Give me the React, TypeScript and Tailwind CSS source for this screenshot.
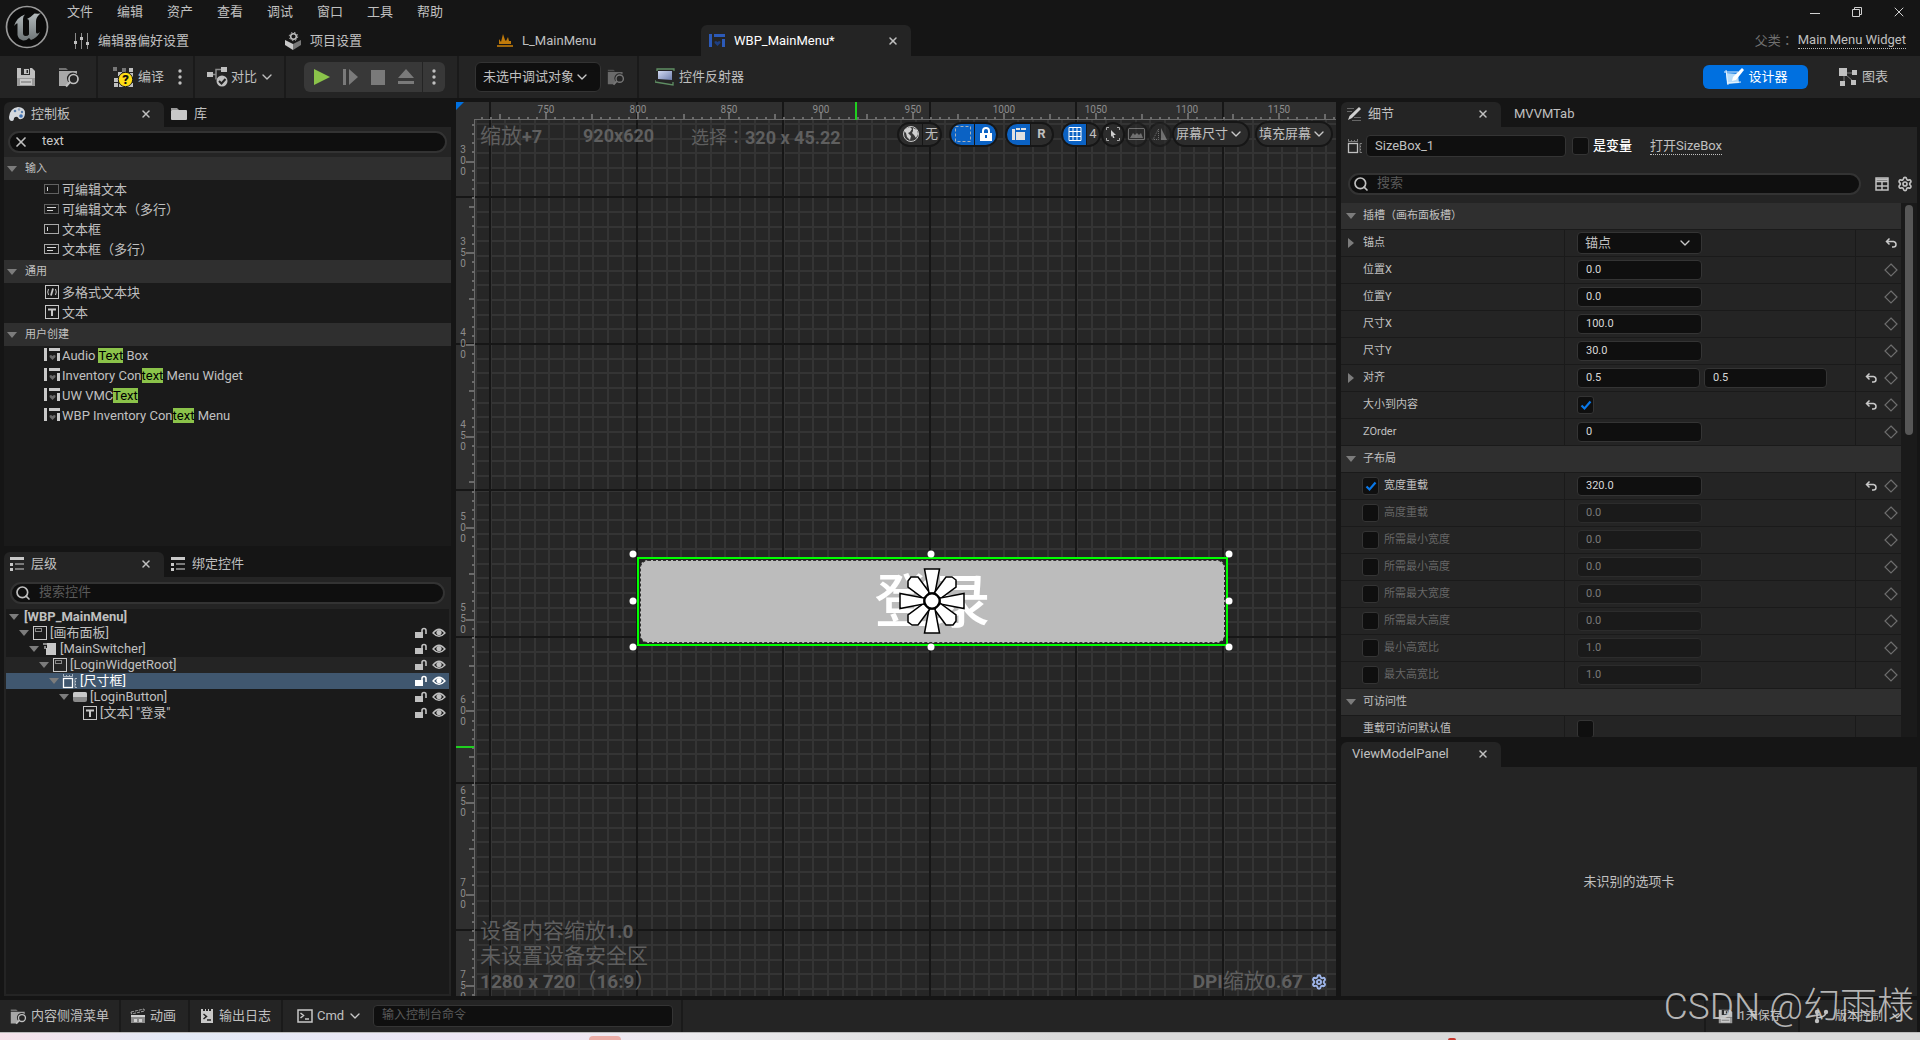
import { Fragment, useId } from 'react';
import type { ReactNode } from 'react';
import { ChevronDown, Search, Settings, X } from 'lucide-react';

const menus = ['文件', '编辑', '资产', '查看', '调试', '窗口', '工具', '帮助'];

type PaletteItem = { icon: ReactNode; text: string; hit?: string };

const palette: { title: string; items: PaletteItem[] }[] = [
  {
    title: '输入',
    items: [
      { icon: <BoxIcon dashed />, text: '可编辑文本' },
      { icon: <BoxIcon dashed multi />, text: '可编辑文本（多行）' },
      { icon: <BoxIcon />, text: '文本框' },
      { icon: <BoxIcon multi />, text: '文本框（多行）' },
    ],
  },
  {
    title: '通用',
    items: [
      { icon: <RichTextIcon />, text: '多格式文本块' },
      { icon: <TextIcon />, text: '文本' },
    ],
  },
  {
    title: '用户创建',
    items: [
      { icon: <WidgetIcon />, text: 'Audio Text Box', hit: 'Text' },
      { icon: <WidgetIcon />, text: 'Inventory Context Menu Widget', hit: 'text' },
      { icon: <WidgetIcon />, text: 'UW VMCText', hit: 'Text' },
      { icon: <WidgetIcon />, text: 'WBP Inventory Context Menu', hit: 'text' },
    ],
  },
];

const tree: { text: string; pad: string; icon?: ReactNode; leaf?: boolean; tone?: string }[] = [
  { text: '[WBP_MainMenu]', pad: 'pl-[3px]' },
  { text: '[画布面板]', pad: 'pl-[13px]', icon: <CanvasIcon /> },
  { text: '[MainSwitcher]', pad: 'pl-[23px]', icon: <SwitcherIcon /> },
  { text: '[LoginWidgetRoot]', pad: 'pl-[33px]', icon: <CanvasIcon />, tone: 'bg-[#242424]' },
  { text: '[尺寸框]', pad: 'pl-[43px]', icon: <SizeBoxIcon />, tone: 'bg-[#40576f] text-white' },
  { text: '[LoginButton]', pad: 'pl-[53px]', icon: <ButtonIcon /> },
  { text: '[文本] "登录"', pad: 'pl-[63px]', icon: <TextIcon />, leaf: true },
];

type Row = {
  name: string;
  kind?: 'header' | 'anchor' | 'check';
  values?: string[];
  expand?: boolean;
  override?: boolean;
  checked?: boolean;
  reset?: boolean;
  noBind?: boolean;
};

const rows: Row[] = [
  { name: '插槽（画布面板槽）', kind: 'header' },
  { name: '锚点', kind: 'anchor', expand: true, reset: true, noBind: true },
  { name: '位置X', values: ['0.0'] },
  { name: '位置Y', values: ['0.0'] },
  { name: '尺寸X', values: ['100.0'] },
  { name: '尺寸Y', values: ['30.0'] },
  { name: '对齐', values: ['0.5', '0.5'], expand: true, reset: true },
  { name: '大小到内容', kind: 'check', checked: true, reset: true },
  { name: 'ZOrder', values: ['0'] },
  { name: '子布局', kind: 'header' },
  { name: '宽度重载', values: ['320.0'], override: true, checked: true, reset: true },
  { name: '高度重载', values: ['0.0'], override: true },
  { name: '所需最小宽度', values: ['0.0'], override: true },
  { name: '所需最小高度', values: ['0.0'], override: true },
  { name: '所需最大宽度', values: ['0.0'], override: true },
  { name: '所需最大高度', values: ['0.0'], override: true },
  { name: '最小高宽比', values: ['1.0'], override: true },
  { name: '最大高宽比', values: ['1.0'], override: true },
  { name: '可访问性', kind: 'header' },
  { name: '重载可访问默认值', kind: 'check', noBind: true },
];

// ---------- icons ----------

function BoxIcon({ dashed, multi }: { dashed?: boolean; multi?: boolean }) {
  return (
    <svg width="16" height="16" viewBox="0 0 16 16" fill="none" stroke="#a8a8a8">
      <rect x=".5" y="3.5" width="14" height="9" strokeDasharray={dashed ? '1 1' : undefined} />
      {multi ? <path d="M3 6.500h9M3 9.500h6" stroke="#d8d8d8" /> : <path d="M3.500 6v4" stroke="#d8d8d8" />}
    </svg>
  );
}

function RichTextIcon() {
  return (
    <svg width="16" height="16" viewBox="0 0 16 16" fill="none" stroke="#c8c8c8">
      <rect x="1.5" y="1.5" width="13" height="13" />
      <path d="M4.500 5Q3 8 4.500 11M11.500 5Q13 8 11.500 11" />
      <path d="M9 4.500L7 11.500" strokeWidth="1.800" />
    </svg>
  );
}

function TextIcon() {
  return (
    <svg width="16" height="16" viewBox="0 0 16 16" fill="none" stroke="#c8c8c8">
      <rect x="1.5" y="1.5" width="13" height="13" />
      <path d="M4 5.500h8M8 5v7" strokeWidth="2" />
    </svg>
  );
}

function WidgetIcon({ fill = '#c8c8c8', heart = '#6a6a6a' }: { fill?: string; heart?: string }) {
  return (
    <svg width="16" height="16" viewBox="0 0 16 16">
      <path d="M0 1h3v13H0zM5 1h11v3H5zM13 6h3v8h-3z" fill={fill} />
      <path d="M8.500 13L5.500 10q-.5-2 1.500-2l1.500 1L10 8q2 0 1.500 2z" fill={heart} />
    </svg>
  );
}

function CanvasIcon() {
  return (
    <svg width="16" height="16" viewBox="0 0 16 16" fill="none" stroke="#c8c8c8">
      <rect x="1.5" y="1.5" width="13" height="13" />
      <rect x="3.500" y="3.500" width="6" height="3" stroke="#8a8a8a" />
    </svg>
  );
}

function SwitcherIcon() {
  return (
    <svg width="16" height="16" viewBox="0 0 16 16">
      <path d="M1 2h4v2H1zM2 5h2v3H2z" fill="#8a8a8a" />
      <path d="M5 2h9v12H4V7h1z" fill="#c8c8c8" />
    </svg>
  );
}

function SizeBoxIcon() {
  return (
    <svg width="16" height="16" viewBox="0 0 16 16" fill="none" stroke="currentColor">
      <rect x="1.5" y="5.500" width="9" height="9" strokeWidth="1.300" />
      <path d="M1.500 1v2.500h9V1M4.500 2v1M7.500 2v1M15 5.500h-2v9h2M14 8.500h-1M14 11.500h-1" opacity=".55" />
    </svg>
  );
}

function ButtonIcon() {
  return (
    <svg width="16" height="16" viewBox="0 0 16 16">
      <rect x="1" y="3" width="14" height="10" rx="2" fill="#8a8a8a" />
      <path d="M1 8V5q0-2 2-2h10q2 0 2 2v3z" fill="#c8c8c8" />
    </svg>
  );
}

function FolderSearch({ size = 22 }: { size?: number }) {
  return (
    <svg width={size} height={size} viewBox="0 0 22 22">
      <path d="M1 2h7l2 2H1z" fill="currentColor" opacity=".5" />
      <path d="M1 5h18v3a6 6 0 0 0-8 9l-2 3H1z" fill="currentColor" opacity=".85" />
      <circle cx="15.500" cy="13" r="4.500" fill="none" stroke="currentColor" strokeWidth="1.700" />
      <path d="M12 16l-4 4.500" stroke="currentColor" strokeWidth="2" />
    </svg>
  );
}

function SaveIcon({ size = 20 }: { size?: number }) {
  return (
    <svg width={size} height={size} viewBox="0 0 20 20">
      <path d="M1 1h15l3 3v7H1z" fill="#c0c0c0" />
      <path d="M1 11h18v8H1z" fill="#9a9a9a" />
      <path d="M5 1h9v7H5z" fill="#2a2a2a" />
      <path d="M8 2h5v5H8z" fill="#c0c0c0" />
      <path d="M10.500 3h1.500v3h-1.500z" fill="#2a2a2a" />
      <path d="M4 12h12v6H4z" fill="#c8c8c8" />
      <path d="M5 15h10" stroke="#6a6a6a" />
    </svg>
  );
}

function CompileIcon() {
  return (
    <svg width="22" height="22" viewBox="0 0 22 22">
      <g fill="#c0c0c0">
        <path d="M17 2h4v4h-4zM6 6h4v4H6zM2 12h4v4H2zM2 17h4v4H2zM7 17h14v4H7zM17 7h4v4h-4z" />
      </g>
      <path d="M1 1h4v4H1zM10 2h4v4h-4zM6 11h4v4H6z" fill="#777" />
      <circle cx="13.500" cy="13.500" r="7.200" fill="#ffdd15" stroke="#1a1a1a" />
      <text x="13.500" y="18" textAnchor="middle" fontSize="13" fontWeight="900" fontFamily="Roboto" fill="#111">?</text>
    </svg>
  );
}

function DiffIcon() {
  return (
    <svg width="22" height="22" viewBox="0 0 22 22" fill="#c0c0c0">
      <path d="M1 6h6v5H1zM15 1h6v5h-6z" />
      <path d="M7 8.500h3v-5h5M10 8.500v5" fill="none" stroke="#8a8a8a" strokeWidth="1.500" />
      <circle cx="16" cy="15" r="5.500" />
      <path d="M13 15l2.500 2.500L19.500 13" fill="none" stroke="#222" strokeWidth="2" />
    </svg>
  );
}

function Logo() {
  return (
    <svg width="44" height="44" viewBox="0 0 44 44">
      <defs>
        <linearGradient id="logoShade" x1="0" y1="0" x2="0" y2="1">
          <stop offset="0" stopColor="#b4bbbd" />
          <stop offset="1" stopColor="#6d7476" />
        </linearGradient>
      </defs>
      <circle cx="22" cy="22" r="20.500" fill="#0b0b0b" stroke="#9a9a9a" strokeWidth="1.700" />
      <path
        d="M9 21Q12 12 20 9.500Q18 11 18 14V28Q18 31 20.500 31Q23 31 24 29.500V16Q24 14 22 14Q26 12 29.500 8.500Q35 9 36 8Q31 12 31 16V27Q31 29 33 28.500L35 27Q32 33 26 35L24 33Q21 36 18 35.500Q13 34 12.500 30V19Q12.500 17 9 21Z"
        fill="url(#logoShade)"
      />
    </svg>
  );
}

function PaletteIcon() {
  return (
    <svg width="16" height="16" viewBox="0 0 16 16">
      <path d="M9 1Q16 1 16 7.500Q15.500 14 10 13Q8 9 5 12Q5 15 3 15Q0 15 0 11Q1 2 9 1z" fill="#d5d9de" />
      <circle cx="6" cy="5" r="1.300" fill="#5a7fae" />
      <circle cx="10" cy="3.500" r="1.200" fill="#8da6c4" />
      <circle cx="13" cy="6" r="1.200" fill="#5a7fae" />
      <circle cx="12" cy="10" r="1.800" fill="#3f72b5" />
    </svg>
  );
}

function ListIcon() {
  return (
    <svg width="16" height="16" viewBox="0 0 16 16">
      <path d="M1 1h14v3H1zM1 7h3v3H1zM1 12h3v3H1z" fill="#c8c8c8" />
      <path d="M6 7h9v2H6zM6 12h9v2H6z" fill="#7a7a7a" />
    </svg>
  );
}

function FolderIcon() {
  return (
    <svg width="18" height="14" viewBox="0 0 18 14">
      <path d="M1 1h6l2 2H1z" fill="#999" />
      <path d="M1 4q0-1 1-1h14q1 0 1 1v8q0 1-1 1H2q-1 0-1-1z" fill="#c8c8c8" />
    </svg>
  );
}

function PencilIcon() {
  return (
    <svg width="16" height="16" viewBox="0 0 16 16">
      <path d="M1 2.500h7M1 5.500h5M8 11.500h7M6 14.500h9" stroke="#666" />
      <path d="M13 1l2 2-9 9-4 2 1.500-4z" fill="#d0d0d0" />
    </svg>
  );
}

function LockOpen() {
  return (
    <svg width="14" height="12" viewBox="0 0 14 12">
      <path d="M1 5h8v6H1z" fill="currentColor" />
      <path d="M8 5V3.500a2 2 0 0 1 4 0V7" fill="none" stroke="currentColor" strokeWidth="1.600" />
    </svg>
  );
}

function Eye() {
  return (
    <svg width="14" height="12" viewBox="0 0 14 12" fill="none" stroke="currentColor">
      <path d="M1 6Q7-1.500 13 6Q7 12.500 1 6z" strokeWidth="1.300" />
      <circle cx="7" cy="5.500" r="2.600" fill="currentColor" stroke="none" />
    </svg>
  );
}

function ResetIcon() {
  return (
    <svg width="14" height="12" viewBox="-1 0 14 12" fill="none" stroke="#c8c8c8" strokeWidth="1.500">
      <path d="M4.500 1.500L1.500 4.500l3 3M1.500 4.500H8.500Q11 5 11 7.500Q11 10 8.500 10H7" />
    </svg>
  );
}

function Diamond() {
  return (
    <svg width="14" height="14" viewBox="0 0 14 14" fill="none" stroke="#6e6e6e" strokeWidth="1.200">
      <path d="M7 1l6 6-6 6-6-6z" />
    </svg>
  );
}

function Triangle({ right }: { right?: boolean }) {
  return (
    <svg width="10" height="10" viewBox="0 0 10 10" fill="#7c7c7c" className="shrink-0">
      {right ? <path d="M2 0l6 5-6 5z" /> : <path d="M0 2h10L5 8z" />}
    </svg>
  );
}

function Dots() {
  return (
    <svg width="4" height="16" viewBox="0 0 4 16" fill="#c0c0c0">
      <circle cx="2" cy="2" r="1.700" />
      <circle cx="2" cy="8" r="1.700" />
      <circle cx="2" cy="14" r="1.700" />
    </svg>
  );
}

// ---------- shared controls ----------

function Divider() {
  return <span className="w-[2px] shrink-0 self-stretch bg-[#1a1a1a]" />;
}

function Colon() {
  return <span className="font-['Noto_Sans_CJK_TC',sans-serif]">：</span>;
}

function Select({ label, className, pad = 'pl-2' }: { label: string; className: string; pad?: string }) {
  return (
    <span className={`relative flex items-center ${className}`}>
      <select aria-label={label} className={`h-full w-full appearance-none bg-transparent outline-none ${pad}`}>
        <option>{label}</option>
      </select>
      <ChevronDown className="pointer-events-none absolute right-2 h-4 w-4 text-[#c8c8c8]" />
    </span>
  );
}

function Tab({ icon, children, active }: { icon?: ReactNode; children: ReactNode; active?: boolean }) {
  return (
    <div className={`flex h-[25px] items-center pb-[2px] ${active ? 'w-40 rounded-t-md bg-[#242424] pl-[5px]' : 'pl-[6px]'}`}>
      <button role="tab" aria-selected={!!active} className="flex items-center gap-[6px]">
        {icon}
        {children}
      </button>
      {active && (
        <button aria-label="close" className="mr-3 ml-auto">
          <X className="h-3 w-3" strokeWidth={3} />
        </button>
      )}
    </div>
  );
}

function CheckBox({ id, checked }: { id: string; checked?: boolean }) {
  return (
    <span className="relative flex h-[18px] w-[17px] shrink-0 items-center justify-center">
      <input
        id={id}
        type="checkbox"
        defaultChecked={checked}
        className="peer h-full w-full appearance-none rounded-[3px] border border-[#343434] bg-[#0f0f0f]"
      />
      <svg viewBox="0 0 12 12" className="pointer-events-none absolute hidden h-3 w-3 peer-checked:block">
        <path d="M1.500 6.500L4.500 9.500L10.500 2.500" fill="none" stroke="#0a78e8" strokeWidth="2.200" />
      </svg>
    </span>
  );
}

function SearchBox({ placeholder, value }: { placeholder: string; value?: string }) {
  return (
    <label className="flex h-[22px] flex-1 items-center rounded-full border-2 border-[#333] bg-[#0f0f0f] px-[3px]">
      {value ? (
        <X className="mr-[13px] h-4 w-4 shrink-0" strokeWidth={2.5} />
      ) : (
        <Search className="mr-2 h-4 w-4 shrink-0" strokeWidth={2.5} />
      )}
      <input
        aria-label={placeholder}
        placeholder={placeholder}
        defaultValue={value}
        className="w-full bg-transparent pb-[2px] leading-4 text-[#c8c8c8] outline-none placeholder:text-[#5a5a5a]"
      />
    </label>
  );
}

// ---------- top ----------

function TitleBar() {
  return (
    <header className="flex h-14 shrink-0 items-stretch">
      <div className="w-[62px] shrink-0 pt-[5px] pl-[5px]">
        <Logo />
      </div>
      <div className="flex min-w-0 flex-1 flex-col">
        <div className="flex h-[25px] items-center justify-between pb-[2px] pl-[5px]">
          <nav className="flex gap-6">
            {menus.map((m) => (
              <button key={m} className="w-[26px]">
                {m}
              </button>
            ))}
          </nav>
          <div className="flex items-center gap-[26px] pr-[13px]">
            <button aria-label="minimize">
              <svg width="16" height="16" viewBox="0 0 16 16" stroke="#d0d0d0">
                <path d="M3 9.500h10" />
              </svg>
            </button>
            <button aria-label="restore">
              <svg width="16" height="16" viewBox="0 0 16 16" fill="none" stroke="#d0d0d0">
                <path d="M3.500 5.500h7v7h-7zM5.500 5V3.500h7v7H11" />
              </svg>
            </button>
            <button aria-label="close window">
              <X className="h-4 w-4 text-[#d0d0d0]" strokeWidth={1.5} />
            </button>
          </div>
        </div>
        <div className="flex h-[31px] items-center">
          <button className="flex w-[212px] items-center gap-2 pl-[11px]">
            <svg width="17" height="16" viewBox="0 0 17 16" stroke="#c0c0c0" fill="#c0c0c0">
              <path d="M2.500 0v16M8.500 0v16M14.500 0v16" stroke="#8a8a8a" />
              <path d="M1 8h3v3H1zM7 4h3v3H7zM13 9h3v3h-3z" stroke="none" />
            </svg>
            编辑器偏好设置
          </button>
          <button className="flex w-[212px] items-center gap-2 pl-[10px]">
            <svg width="18" height="18" viewBox="0 0 18 18">
              <path d="M1 8l8 4v6l-8-5z" fill="#c8c8c8" />
              <path d="M17 8l-8 4v6l8-5z" fill="#777" />
              <circle cx="9.500" cy="4.500" r="2.800" fill="none" stroke="#c0c0c0" strokeWidth="1.500" />
              <circle cx="9.500" cy="4.500" r="4.200" fill="none" stroke="#c0c0c0" strokeDasharray="1.500 1.800" />
            </svg>
            项目设置
          </button>
          <button className="flex w-[215px] items-center gap-2 pl-[10px]">
            <svg width="18" height="16" viewBox="0 0 18 16" fill="#c07a0a">
              <path d="M3 11V6l2 3 2-8 2 6 1 1 2-4 1 4 2 0v3z" />
              <path d="M1 12h16v2H1z" opacity=".8" />
            </svg>
            L_MainMenu
          </button>
          <div className="flex h-full w-[210px] items-center rounded-t-md bg-[#242424] pl-2 text-white">
            <button className="flex items-center gap-[9px]">
              <WidgetIcon fill="#2c5ab8" heart="#1f3f80" />
              WBP_MainMenu*
            </button>
            <button aria-label="close tab" className="mr-3 ml-auto">
              <X className="h-3 w-3 text-[#c0c0c0]" strokeWidth={3} />
            </button>
          </div>
          <div className="ml-auto flex items-center gap-1 pr-[14px]">
            <span className="text-[#707070]">
              父类
              <Colon />
            </span>
            <a href="#" className="border-b border-dotted border-[#c0c0c0] leading-4">
              Main Menu Widget
            </a>
          </div>
        </div>
      </div>
    </header>
  );
}

function ToolBar() {
  return (
    <div className="flex h-[42px] shrink-0 items-center bg-[#242424]">
      <div className="flex w-24 items-center gap-[22px] pl-4">
        <button aria-label="save">
          <SaveIcon />
        </button>
        <button aria-label="browse">
          <FolderSearch />
        </button>
      </div>
      <Divider />
      <div className="flex w-[95px] items-center pl-[14px]">
        <button className="flex items-center gap-1">
          <CompileIcon />
          编译
        </button>
        <button aria-label="compile options" className="ml-[14px]">
          <Dots />
        </button>
      </div>
      <Divider />
      <button className="flex w-[89px] items-center pl-[11px]">
        <DiffIcon />
        <span className="mr-[2px] ml-[3px]">对比</span>
        <ChevronDown className="h-4 w-4" />
      </button>
      <Divider />
      <div className="mr-3 ml-[18px] flex h-[30px] items-center rounded-md bg-[#383838]">
        <div className="flex items-center gap-[10px] pr-[7px] pl-[9px]">
          <button aria-label="play">
            <svg width="18" height="18" viewBox="0 0 18 18">
              <path d="M1 1l16 8-16 8z" fill="#8bc34a" />
            </svg>
          </button>
          <button aria-label="step">
            <svg width="18" height="18" viewBox="0 0 18 18" fill="#7a7a7a">
              <path d="M2 1h3v16H2zM8 1l9 8-9 8z" />
            </svg>
          </button>
          <button aria-label="stop">
            <svg width="18" height="18" viewBox="0 0 18 18" fill="#7a7a7a">
              <path d="M2 2h14v15H2z" />
            </svg>
          </button>
          <button aria-label="eject">
            <svg width="18" height="18" viewBox="0 0 18 18" fill="#7a7a7a">
              <path d="M9 1l8 9H1zM1 13h16v3H1z" />
            </svg>
          </button>
        </div>
        <button aria-label="play options" className="flex h-full w-[23px] items-center justify-center border-l border-[#242424]">
          <Dots />
        </button>
      </div>
      <Divider />
      <Select label="未选中调试对象" className="ml-4 h-[30px] w-[126px] rounded-md border border-[#333] bg-[#0f0f0f] *:last:right-[10px]" pad="pl-[7px]" />
      <button aria-label="find debug object" className="mr-3 ml-[6px] text-[#777]">
        <FolderSearch size={18} />
      </button>
      <Divider />
      <button className="ml-4 flex items-center gap-1">
        <svg width="20" height="18" viewBox="0 0 20 18">
          <defs>
            <linearGradient id="screen" x1="0" y1="0" x2="1" y2="1">
              <stop offset="0" stopColor="#d2daf2" />
              <stop offset="1" stopColor="#6f7fae" />
            </linearGradient>
          </defs>
          <path d="M2 3V1h17v2M0 12v2l18 3v-3" fill="none" stroke="#5f8e63" strokeWidth="1.300" />
          <path d="M3 3h14v9l-14-1z" fill="url(#screen)" />
        </svg>
        控件反射器
      </button>
      <div className="mr-8 ml-auto flex items-center gap-[31px]">
        <button className="flex h-6 w-[105px] items-center justify-center gap-1 rounded-md bg-[#0070e0] text-white">
          <svg width="21" height="18" viewBox="0 0 21 18">
            <path d="M3 5l12 1 1 9-12 1z" fill="#b8dcf8" />
            <path d="M1 4h14M3 2l2 15M4 15l14-1" fill="none" stroke="#e8f4ff" />
            <path d="M19 0l2 2-8 10-4 1 1-4z" fill="#fff" />
          </svg>
          设计器
        </button>
        <button className="flex items-center gap-[5px]">
          <svg width="18" height="18" viewBox="0 0 18 18" fill="#c0c0c0">
            <path d="M5 5l10 0M5 5v10M6 6l9 8" stroke="#777" />
            <path d="M0 0h8v8H0zM13 2h5v5h-5zM1 13h5v5H1zM12 12h5v5h-5z" />
          </svg>
          图表
        </button>
      </div>
    </div>
  );
}

// ---------- left ----------

function Highlight({ text, hit }: { text: string; hit?: string }) {
  if (!hit) return <>{text}</>;
  const [before, after] = text.split(hit);
  return (
    <>
      {before}
      <mark className="bg-[#8bc34a] text-black">{hit}</mark>
      {after}
    </>
  );
}

function PalettePanel() {
  return (
    <section className="flex min-h-0 flex-1 flex-col">
      <div role="tablist" className="flex">
        <Tab active icon={<PaletteIcon />}>
          控制板
        </Tab>
        <Tab icon={<FolderIcon />}>库</Tab>
      </div>
      <div className="flex h-[30px] shrink-0 items-center bg-[#242424] px-1">
        <SearchBox placeholder="搜索控制板" value="text" />
      </div>
      <div className="min-h-0 flex-1 overflow-hidden bg-[#1a1a1a]">
        {palette.map((group) => (
          <Fragment key={group.title}>
            <button className="flex h-[23px] w-full items-center gap-2 bg-[#2f2f2f] pl-[3px] text-[11px]">
              <Triangle />
              {group.title}
            </button>
            <ul>
              {group.items.map((item) => (
                <li key={item.text} className="flex h-5 items-center gap-[2px] pb-[2px] pl-10 leading-[15px]">
                  {item.icon}
                  <span>
                    <Highlight text={item.text} hit={item.hit} />
                  </span>
                </li>
              ))}
            </ul>
          </Fragment>
        ))}
      </div>
    </section>
  );
}

function HierarchyPanel() {
  return (
    <section className="flex min-h-0 flex-1 flex-col">
      <div role="tablist" className="flex">
        <Tab active icon={<ListIcon />}>
          层级
        </Tab>
        <Tab icon={<ListIcon />}>绑定控件</Tab>
      </div>
      <div className="flex min-h-0 flex-1 flex-col bg-[#242424] px-[2px] pb-[2px]">
        <div className="flex h-8 shrink-0 items-center px-1">
          <SearchBox placeholder="搜索控件" />
        </div>
        <ul className="min-h-0 flex-1 overflow-hidden bg-[#1a1a1a]">
          {tree.map((node) => (
            <li key={node.text} className={`flex h-4 items-center leading-4 ${node.pad} ${node.tone ?? ''}`}>
              {node.leaf ? <span className="w-[10px]" /> : <Triangle />}
              <span className="ml-[3px]">{node.icon}</span>
              <span className={node.icon ? 'ml-[2px]' : 'ml-[2px] font-bold'}>{node.text}</span>
              {node.icon && (
                <span className="mr-[3px] ml-auto flex gap-1">
                  <button aria-label={`lock ${node.text}`}>
                    <LockOpen />
                  </button>
                  <button aria-label={`show ${node.text}`}>
                    <Eye />
                  </button>
                </span>
              )}
            </li>
          ))}
        </ul>
      </div>
    </section>
  );
}

// ---------- designer canvas ----------

const UNIT = 1.8325; // screen px per slate unit
const range = (n: number) => Array.from({ length: n }, (_, i) => i);

function Grid() {
  const cell = UNIT * 8;
  return (
    <svg className="absolute inset-0 h-full w-full" shapeRendering="crispEdges">
      {range(120).map((i) => (
        <rect key={`v${i}`} x={19 + Math.round(i * cell)} width="2" height="100%" fill="#343434" />
      ))}
      {range(90).map((i) => (
        <rect key={`h${i}`} y={21 + Math.round(i * cell)} height="2" width="100%" fill="#343434" />
      ))}
      <rect width="100%" height="18" fill="#2f2f2f" />
      <rect width="19" height="100%" fill="#2f2f2f" />
      {range(16).map((i) => (
        <rect key={`V${i}`} x={33 + Math.round(i * cell * 10)} width="2" height="100%" fill="#161616" />
      ))}
      {range(12).map((i) => (
        <rect key={`H${i}`} y={94 + Math.round(i * cell * 10)} height="2" width="100%" fill="#161616" />
      ))}
    </svg>
  );
}

function Rulers() {
  const step = UNIT * 5;
  return (
    <svg className="absolute inset-0 h-full w-full" fill="#8c8c8c" fontSize="10" fontFamily="Roboto">
      <g shapeRendering="crispEdges" fill="#6a6a6a">
        <rect x="18" y="17" width="100%" height="1" />
        <rect x="18" y="17" width="1" height="100%" />
        {range(180).map((i) => {
          const h = i % 10 === 7 ? 6 : i % 10 === 2 ? 5 : 2;
          return <rect key={i} x={25 + Math.round(i * step)} y={17 - h} width="2" height={h} />;
        })}
        {range(140).map((i) => {
          const w = i % 10 === 4 ? 8 : i % 10 === 9 ? 5 : 2;
          return <rect key={i} y={22 + Math.round(i * step)} x={18 - w} width={w} height="2" />;
        })}
      </g>
      {range(9).map((i) => (
        <text key={i} x={90 + Math.round(i * UNIT * 50)} y="11" textAnchor="middle">
          {750 + i * 50}
        </text>
      ))}
      {range(10).map((i) =>
        String(300 + i * 50)
          .split('')
          .map((d, j) => (
            <text key={`${i}-${j}`} x="7" y={51 + j * 11 + Math.round(i * UNIT * 50)} textAnchor="middle">
              {d}
            </text>
          )),
      )}
      <path d="M0 0h8L0 8z" fill="#0070e0" />
      <path d="M400 0v18M0 645h18" stroke="#1fd01f" strokeWidth="2" />
    </svg>
  );
}

function Anchor() {
  return (
    <svg width="66" height="66" viewBox="-33 -33 66 66" fill="#fff" stroke="#000" strokeWidth="1.500">
      {[0, 90, 180, 270].map((a) => (
        <g key={a} transform={`rotate(${a})`}>
          <path d="M-24-20L-21-24H-14L-2.500-8.500-8.500-2.500-24-14z" />
          <path d="M-7.500-32h15L3-8h-6z" />
        </g>
      ))}
      <circle r="7.500" strokeWidth="2" />
    </svg>
  );
}

function SelectedWidget() {
  const handle = 'absolute h-[7px] w-[7px] rounded-full bg-white -translate-1/2';
  return (
    <div className="absolute top-[452px] left-[177px] h-[93px] w-[596px]">
      <div className="absolute top-[3px] right-px bottom-px left-1 border-2 border-[#00ff00] bg-[#222] p-px">
        <div className="flex h-full items-center justify-center rounded-lg border border-dashed border-[#333] bg-[#bcbcbc] text-[58px] leading-none font-medium text-white">
          登录
        </div>
      </div>
      <div className="absolute inset-0 flex items-center justify-center pl-[2px]">
        <Anchor />
      </div>
      <i className={`${handle} top-0 left-0`} />
      <i className={`${handle} top-0 left-1/2`} />
      <i className={`${handle} top-0 left-full`} />
      <i className={`${handle} top-1/2 left-0`} />
      <i className={`${handle} top-1/2 left-full`} />
      <i className={`${handle} top-full left-0`} />
      <i className={`${handle} top-full left-1/2`} />
      <i className={`${handle} top-full left-full`} />
    </div>
  );
}

function Latin({ children }: { children: ReactNode }) {
  return <span className="text-[19px] leading-6 font-bold">{children}</span>;
}

function CanvasTools() {
  const pill = 'flex h-[25px] items-center overflow-hidden rounded-full border-2 border-[#161616] bg-[#2c2c2c]';
  const cell = 'flex h-full items-center justify-center';
  return (
    <div className="flex items-center pr-[3px]">
      <div className={`${pill} mr-[7px] w-[45px]`}>
        <button aria-label="locale" className={`${cell} w-6 shrink-0 border-r border-[#161616]`}>
          <svg width="18" height="18" viewBox="0 0 18 18">
            <circle cx="9" cy="9" r="7.500" fill="#3a3a3a" stroke="#c8c8c8" />
            <path d="M3 4l5-2 2 2-2 3-2 1 3 3-1 4-3-3-1-4-2-2zM11 3l4 2 1 4-2 4-2-3-2-2 1-2z" fill="#d0d0d0" />
          </svg>
        </button>
        <button className={`${cell} flex-1`}>无</button>
      </div>
      <div className={`${pill} mr-[7px] w-[49px]`}>
        <button aria-label="outlines" className={`${cell} w-6 border-r border-[#161616] bg-[#0b62c4]`}>
          <svg width="16" height="16" viewBox="0 0 16 16" fill="none" stroke="#a8b0b8">
            <rect x=".5" y=".5" width="15" height="15" strokeDasharray="3 2" />
          </svg>
        </button>
        <button aria-label="respect locks" className={`${cell} flex-1 bg-[#0b62c4]`}>
          <svg width="12" height="14" viewBox="0 0 12 14">
            <path d="M3 6V4a3 3 0 0 1 6 0v2" fill="none" stroke="#fff" strokeWidth="2" />
            <path d="M0 6h12v8H0z" fill="#fff" />
            <path d="M6 8v3" stroke="#0b62c4" strokeWidth="2" />
          </svg>
        </button>
      </div>
      <div className={`${pill} mr-[7px] w-[49px]`}>
        <button aria-label="layout mode" className={`${cell} w-6 border-r border-[#161616] bg-[#0b62c4]`}>
          <svg width="16" height="14" viewBox="0 0 16 14" fill="#e0e0e0">
            <path d="M1 2h3v11H1zM5 5h9v8H5zM5 1h4v2H5zM10 1h5v2h-5z" />
          </svg>
        </button>
        <button className={`${cell} flex-1 font-bold`}>R</button>
      </div>
      <div className={`${pill} w-10`}>
        <button aria-label="grid snap" className={`${cell} w-6 border-r border-[#161616] bg-[#0b62c4]`}>
          <svg width="14" height="16" viewBox="0 0 14 16" fill="none" stroke="#fff">
            <path d="M1 1.500h12v13H1zM5 1v14M9 1v14M1 5.500h12M1 10.500h12" />
          </svg>
        </button>
        <button className={`${cell} flex-1`}>4</button>
      </div>
      <button aria-label="zoom to fit" className={`${pill} w-6 justify-center`}>
        <svg width="16" height="16" viewBox="0 0 16 16" fill="none" stroke="#a8a8a8" className="shrink-0">
          <path d="M1.500 4V1.500H4M12 1.500h2.500V4M14.500 12v2.500H12M4 14.500H1.500V12" />
          <path d="M6 4l5 5H8.500l1 3-1.500 0-1-2.500L6 11z" fill="#d0d0d0" stroke="none" />
        </svg>
      </button>
      <button aria-label="preview background" className={`${pill} w-[23px] justify-center opacity-60`}>
        <svg width="17" height="14" viewBox="0 0 17 14" fill="none" stroke="#a0a0a0" className="shrink-0">
          <path d="M.5 1.500h16v11H.5z" />
          <path d="M2 11l3-5 2 2 2-2 2 2 2-2 2 5z" fill="#a0a0a0" stroke="none" />
        </svg>
      </button>
      <button aria-label="mirror" className={`${pill} w-6 justify-center opacity-60`}>
        <svg width="16" height="14" viewBox="0 0 16 14" fill="none" stroke="#a0a0a0" className="shrink-0">
          <path d="M6.500 2v10.500H1z" strokeDasharray="1 1" />
          <path d="M9 1v12h6z" fill="#a0a0a0" stroke="none" />
        </svg>
      </button>
      <Select label="屏幕尺寸" pad="pl-[2px]" className="mr-[5px] h-[26px] w-[78px] rounded-full border-2 border-[#161616] bg-[#2c2c2c] *:last:right-1" />
      <Select label="填充屏幕" pad="pl-[2px]" className="h-[26px] w-[78px] rounded-full border-2 border-[#161616] bg-[#2c2c2c] *:last:right-1" />
    </div>
  );
}

function Designer() {
  return (
    <main className="relative flex flex-col justify-between overflow-hidden bg-[#262626]">
      <Grid />
      <Rulers />
      <SelectedWidget />
      <div className="relative flex items-start justify-between pt-[19px] pl-6 text-[21px] leading-[30px] text-[#5f5f5f]">
        <div className="flex">
          <span className="w-[103px]">
            缩放<span className="text-lg font-bold">+7</span>
          </span>
          <span className="w-[108px] text-lg leading-[30px] font-bold">920x620</span>
          <span className="text-lg leading-[30px]">
            选择
            <Colon />
            <b>320 x 45.22</b>
          </span>
        </div>
        <div className="text-[13px] leading-4 text-[#c0c0c0]">
          <CanvasTools />
        </div>
      </div>
      <div className="relative flex items-end justify-between pr-[9px] pb-[2px] pl-6 text-[21px] leading-[25px] text-[#5f5f5f]">
        <div>
          <p>
            设备内容缩放<Latin>1.0</Latin>
          </p>
          <p>未设置设备安全区</p>
          <p>
            <Latin>1280 x 720</Latin>（<Latin>16:9</Latin>）
          </p>
        </div>
        <div className="flex items-center gap-2">
          <span>
            <Latin>DPI</Latin>缩放<Latin>0.67</Latin>
          </span>
          <button aria-label="DPI settings">
            <Settings className="h-4 w-4 text-[#9db4e8]" strokeWidth={3} />
          </button>
        </div>
      </div>
    </main>
  );
}

// ---------- right ----------

function DetailRow({ row }: { row: Row }) {
  const id = useId();
  if (row.kind === 'header') {
    return (
      <button className="flex h-[27px] w-full items-center gap-[7px] border-b border-[#1a1a1a] bg-[#2f2f2f] pl-[5px]">
        <Triangle />
        {row.name}
      </button>
    );
  }
  const off = row.override && !row.checked;
  const field = off ? 'border-[#2c2c2c] bg-[#1a1a1a] text-[#7a7a7a]' : 'border-[#343434] bg-[#0f0f0f] text-[#d8d8d8]';
  return (
    <div className="grid h-[27px] grid-cols-[minmax(0,224fr)_minmax(0,291fr)_minmax(0,45fr)] border-b border-[#1a1a1a]">
      <div className={`flex items-center border-r border-[#1a1a1a] ${off ? 'text-[#666]' : ''}`}>
        <span className="w-[22px] shrink-0 pl-[5px]">{row.expand && <Triangle right />}</span>
        {row.override && (
          <span className="mr-[5px] -ml-px">
            <CheckBox id={`${id}-on`} checked={row.checked} />
          </span>
        )}
        <label htmlFor={row.override ? `${id}-on` : id}>{row.name}</label>
      </div>
      <div className="flex items-center gap-1 border-r border-[#1a1a1a] pr-7 pl-3">
        {row.kind === 'anchor' && (
          <Select label="锚点" pad="pl-[7px] text-[13px]" className="h-[22px] w-[125px] rounded-[4px] border border-[#343434] bg-[#0f0f0f]" />
        )}
        {row.kind === 'check' && <CheckBox id={id} checked={row.checked} />}
        {row.values?.map((v, i) => (
          <input
            key={i}
            id={i === 0 ? id : undefined}
            aria-label={`${row.name} ${i}`}
            defaultValue={v}
            disabled={off}
            className={`h-5 min-w-0 rounded-[4px] border px-2 pb-[2px] ${field} ${row.values!.length > 1 ? 'w-0 flex-1' : 'w-[125px]'}`}
          />
        ))}
      </div>
      <div className="flex items-center justify-end gap-[6px] pr-[3px]">
        {row.reset && (
          <button aria-label={`reset ${row.name}`}>
            <ResetIcon />
          </button>
        )}
        {!row.noBind && (
          <button aria-label={`bind ${row.name}`}>
            <Diamond />
          </button>
        )}
      </div>
    </div>
  );
}

function DetailsPanel() {
  return (
    <section className="flex min-h-0 flex-5 flex-col">
      <div role="tablist" className="flex">
        <Tab active icon={<PencilIcon />}>
          细节
        </Tab>
        <div className="flex items-center pl-[7px]">
          <Tab>MVVMTab</Tab>
        </div>
      </div>
      <div className="flex h-[76px] shrink-0 flex-col bg-[#242424]">
        <div className="flex items-center pt-2 pl-[6px]">
          <SizeBoxIcon />
          <input
            aria-label="widget name"
            defaultValue="SizeBox_1"
            className="mr-[6px] ml-[3px] h-[22px] w-[200px] rounded-[4px] border border-[#343434] bg-[#0f0f0f] px-2 pb-[2px] outline-none"
          />
          <CheckBox id="is-variable" />
          <label htmlFor="is-variable" className="mr-[18px] ml-1 font-medium text-white">
            是变量
          </label>
          <a href="#" className="border-b border-dotted border-[#c0c0c0] leading-4">
            打开SizeBox
          </a>
        </div>
        <div className="flex items-center pt-4 pr-1 pl-[7px]">
          <SearchBox placeholder="搜索" />
          <button aria-label="property matrix" className="mr-2 ml-[14px]">
            <svg width="14" height="14" viewBox="0 0 14 14" fill="none" stroke="#c0c0c0" strokeWidth="1.500">
              <path d="M1 1h12v12H1zM1 4.500h12M1 9h12M7 4v9" />
              <path d="M1 2.500h12" strokeWidth="2" />
            </svg>
          </button>
          <button aria-label="view options">
            <Settings className="h-4 w-4" strokeWidth={2.5} />
          </button>
        </div>
      </div>
      <div className="flex min-h-0 flex-1 bg-[#1a1a1a]">
        <div className="min-w-0 flex-1 overflow-hidden bg-[#242424] text-[11px]">
          {rows.map((r) => (
            <DetailRow key={r.name} row={r} />
          ))}
        </div>
        <div className="w-4 pt-[2px] pl-1">
          <div className="h-[230px] w-2 rounded-full bg-[#575757]" />
        </div>
      </div>
    </section>
  );
}

function ViewModelPanel() {
  return (
    <section className="flex min-h-0 flex-2 flex-col">
      <div role="tablist" className="flex">
        <Tab active>
          <span className="pl-[6px]">ViewModelPanel</span>
        </Tab>
      </div>
      <div className="flex flex-1 items-center justify-center bg-[#242424]">未识别的选项卡</div>
    </section>
  );
}

// ---------- bottom ----------

function StatusBar() {
  return (
    <footer className="relative mr-[3px] flex h-8 shrink-0 items-center bg-[#242424]">
      <button className="flex h-full w-[119px] items-center gap-1 pl-[10px]">
        <FolderSearch size={17} />
        内容侧滑菜单
      </button>
      <Divider />
      <button className="flex h-full w-[67px] items-center gap-1 pl-[9px]">
        <svg width="16" height="16" viewBox="0 0 16 16">
          <path d="M1 4l13-3 .5 2-13 3z" fill="none" stroke="#a0a0a0" strokeDasharray="3 1" />
          <path d="M1 7h14v8H1z" fill="#8a8a8a" />
          <path d="M1 7h14v2H1zM4 11h3v3H4zM9 11h3v3H9z" fill="#d0d0d0" />
        </svg>
        动画
      </button>
      <Divider />
      <button className="flex h-full w-[91px] items-center gap-[5px] pl-[10px]">
        <svg width="14" height="16" viewBox="0 0 14 16">
          <path d="M1 1h2v2h2V1h1v2h2V1h1v2h2V1h2v14H1z" fill="#c8c8c8" />
          <path d="M3.500 6l3 2.500-3 2.500M7 12h4" fill="none" stroke="#222" strokeWidth="1.500" />
        </svg>
        输出日志
      </button>
      <Divider />
      <div className="flex h-full w-[398px] items-center pl-[14px]">
        <svg width="16" height="14" viewBox="0 0 16 14" fill="none" stroke="#c8c8c8" strokeWidth="1.500">
          <path d="M1 1h14v12H1zM3.500 4l3 2.500-3 2.500M8 10h4" />
        </svg>
        <Select label="Cmd" pad="pl-1" className="mr-[10px] h-6 w-[50px] *:last:right-0" />
        <input
          aria-label="console"
          placeholder="输入控制台命令"
          className="h-[22px] w-[300px] rounded-[4px] border border-[#343434] bg-[#0f0f0f] px-2 pb-[2px] text-xs outline-none placeholder:text-[#5a5a5a]"
        />
      </div>
      <Divider />
      <div className="ml-auto flex h-full items-center text-xs">
        <Divider />
        <button className="flex w-[92px] items-center gap-[6px] pl-3">
          <SaveIcon size={15} />
          1未保存
        </button>
        <Divider />
        <button className="flex w-[117px] items-center gap-[6px] pl-[14px]">
          <svg width="15" height="15" viewBox="0 0 15 15" fill="#c0c0c0">
            <path d="M3 3v9M12 3q0 5-9 6" fill="none" stroke="#c0c0c0" strokeWidth="1.500" />
            <circle cx="3" cy="3" r="2.200" />
            <circle cx="12" cy="3" r="2.200" />
            <circle cx="3" cy="12" r="2.200" />
          </svg>
          版本控制
          <ChevronDown className="h-4 w-4" />
        </button>
      </div>
      <span className="pointer-events-none absolute right-[3px] bottom-[5px] text-[37px] leading-10 font-light whitespace-nowrap text-[#d0d0d0]/85">
        CSDN @幻雨様
      </span>
    </footer>
  );
}

function TaskBar() {
  return (
    <div className="flex h-2 shrink-0 items-end justify-between overflow-hidden border-t border-[#bbb] bg-[linear-gradient(90deg,#f6e2ea,#e3eaf6_9%,#f0e6f4_28%,#ecebee_36%,#dadada_55%)] pl-[589px]">
      <span className="h-1 w-8 rounded-t-md bg-[#ecaea8]" />
      <span className="mr-[464px] h-[2px] w-2 rounded-t-full bg-[#c8372d]" />
    </div>
  );
}

export default function App() {
  return (
    <div className="flex h-screen flex-col overflow-hidden bg-[#151515] font-['Roboto','Noto_Sans_CJK_SC',sans-serif] text-[13px] leading-4 text-[#c0c0c0]">
      <TitleBar />
      <ToolBar />
      <div className="grid min-h-0 flex-1 grid-cols-[minmax(0,447fr)_minmax(0,880fr)_minmax(0,576fr)] gap-[5px] py-1 pr-[3px] pl-1">
        <div className="flex min-h-0 min-w-0 flex-col gap-[6px]">
          <PalettePanel />
          <HierarchyPanel />
        </div>
        <Designer />
        <div className="flex min-h-0 min-w-0 flex-col gap-[5px]">
          <DetailsPanel />
          <ViewModelPanel />
        </div>
      </div>
      <StatusBar />
      <TaskBar />
    </div>
  );
}
